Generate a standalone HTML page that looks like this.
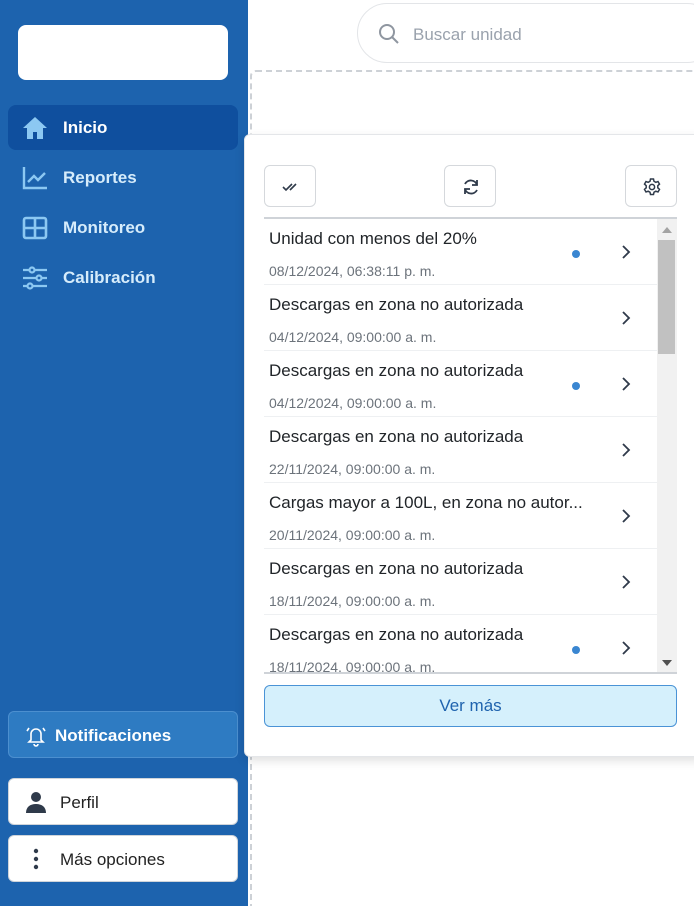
<!DOCTYPE html>
<html><head><meta charset="utf-8"><style>
*{box-sizing:border-box;margin:0;padding:0}
html,body{width:694px;height:906px;overflow:hidden}
body{background:#fff;font-family:"Liberation Sans",sans-serif;position:relative}
.side{position:absolute;left:0;top:0;width:248px;height:906px;background:#1d63ae}
.logo{position:absolute;left:18px;top:25px;width:210px;height:55px;background:#fff;border-radius:8px}
.nav{position:absolute;left:8px;width:230px;height:45px;border-radius:8px;display:flex;align-items:center;color:#fff;font-size:17px;font-weight:bold}
.nav svg{position:absolute;left:14px}
.nav span{position:absolute;left:55px}
.nav.act{background:#0f4f9e}
.nav .lbl{color:#d6ecfb}
.notif{position:absolute;left:8px;top:711px;width:230px;height:47px;background:#2e7bc2;border:1px solid #4c8fcf;border-radius:6px;color:#fff;font-weight:bold;font-size:17px}
.notif svg{position:absolute;left:16px;top:13px}
.notif span{position:absolute;left:46px;top:14px}
.wb{position:absolute;left:8px;width:230px;height:47px;background:#fff;border:1px solid #cfd4da;border-radius:6px;font-size:17px;color:#222}
.wb span{position:absolute;left:51px;top:14px}
.wb svg{position:absolute;left:16px;top:12px}
.search{position:absolute;left:357px;top:3px;width:360px;height:60px;border:1px solid #e3e5e8;border-radius:30px}
.search span{position:absolute;left:55px;top:21px;font-size:17px;color:#9aa2ad}
.search svg{position:absolute;left:20px;top:19px}
.dash{position:absolute;left:250px;top:70px;width:460px;height:860px;border:2px dashed #cdd1d6;border-radius:6px}
.pop{position:absolute;left:244px;top:134px;width:460px;height:623px;background:#fff;border:1px solid #e4e6e9;border-radius:6px;box-shadow:0 4px 10px rgba(0,0,0,.12)}
.btn{position:absolute;top:165px;width:52px;height:42px;border:1px solid #d5d8dc;border-radius:6px;background:#fff}
.btn svg{position:absolute;left:16px;top:11px}
.list{position:absolute;left:264px;top:217px;width:413px;height:457px;border-top:2px solid #cfd3d8;border-bottom:2px solid #cfd3d8;overflow:hidden}
.row{position:absolute;left:0;width:393px;height:66px;border-bottom:1px solid #eef0f2}
.t{position:absolute;left:5px;top:10px;font-size:17px;color:#212529;white-space:nowrap}
.d{position:absolute;left:5px;top:44px;font-size:14px;color:#6c737b}
.dot{position:absolute;left:308px;top:31px;width:8px;height:8px;border-radius:50%;background:#3a86d1}
.chev{position:absolute;left:357px;top:26px}
.sb{position:absolute;left:393px;top:0;width:20px;height:457px;background:#f1f1f1}
.thumb{position:absolute;left:1px;top:21px;width:17px;height:114px;background:#c1c1c1}
.ver{position:absolute;left:264px;top:685px;width:413px;height:42px;background:#d5f0fc;border:1px solid #4a93d6;border-radius:6px;color:#1f63ae;font-size:17px;text-align:center;line-height:40px}
</style></head><body>
<div class="side">
<div class="logo"></div>
<div class="nav act" style="top:105px"><svg width="26" height="24" viewBox="0 0 26 24"><path d="M13 1L1 12h4v11h6v-7h4v7h6V12h4z" fill="#8cc8f2"/></svg><span>Inicio</span></div>
<div class="nav" style="top:155px"><svg width="26" height="24" viewBox="0 0 26 24" fill="none" stroke="#8cc8f2" stroke-width="2.4"><path d="M2 1v21h23"/><path d="M6 16l6-6 4 4 7-7"/></svg><span class="lbl">Reportes</span></div>
<div class="nav" style="top:205px"><svg width="26" height="24" viewBox="0 0 26 24" fill="none" stroke="#8cc8f2" stroke-width="2.6"><rect x="2" y="2" width="22" height="20" rx="2"/><path d="M13 2v20M2 12h22"/></svg><span class="lbl">Monitoreo</span></div>
<div class="nav" style="top:255px"><svg width="26" height="24" viewBox="0 0 26 24" fill="none" stroke="#8cc8f2" stroke-width="2.2"><path d="M1 4h24M1 12h24M1 20h24"/><circle cx="10" cy="4" r="2.5" fill="#1d63ae"/><circle cx="17" cy="12" r="2.5" fill="#1d63ae"/><circle cx="8" cy="20" r="2.5" fill="#1d63ae"/></svg><span class="lbl">Calibración</span></div>
<div class="notif"><svg width="22" height="22" viewBox="0 0 22 22" fill="none" stroke="#fff" stroke-width="1.6"><path d="M6 15V9a5 5 0 0110 0v6l2 2H4z"/><path d="M9 19a2 2 0 004 0"/><path d="M2 6l2-3M20 6l-2-3"/></svg><span>Notificaciones</span></div>
<div class="wb" style="top:778px"><svg width="22" height="22" viewBox="0 0 22 22" fill="#2f3a4a"><circle cx="11" cy="6" r="5"/><path d="M1 22c0-6 4-9 10-9s10 3 10 9z"/></svg><span>Perfil</span></div>
<div class="wb" style="top:835px"><svg width="22" height="22" viewBox="0 0 22 22" fill="#2f3a4a"><circle cx="11" cy="3" r="2.2"/><circle cx="11" cy="11" r="2.2"/><circle cx="11" cy="19" r="2.2"/></svg><span>Más opciones</span></div>
</div>
<div class="search"><svg width="22" height="22" viewBox="0 0 22 22" fill="none" stroke="#8f96a0" stroke-width="2"><circle cx="9" cy="9" r="7"/><path d="M14 14l6 6"/></svg><span>Buscar unidad</span></div>
<div class="dash"></div>
<div class="pop"></div>
<div class="btn" style="left:264px"><svg width="20" height="20" viewBox="0 0 20 20" fill="none" stroke="#2f3a4a" stroke-width="1.6"><path d="M2 10l3 3 6-6M9 13l6-6"/></svg></div>
<div class="btn" style="left:444px"><svg width="20" height="20" viewBox="0 0 20 20" fill="none" stroke="#2f3a4a" stroke-width="1.8"><path d="M16 8a6.5 6.5 0 00-12-1M4 12a6.5 6.5 0 0012 1"/><path d="M16 3v5h-5M4 17v-5h5"/></svg></div>
<div class="btn" style="left:625px"><svg width="20" height="20" viewBox="0 0 20 20" fill="none" stroke="#2f3a4a" stroke-width="1.5"><path d="M8.5 2h3l.5 2.3 1.8 1 2.2-.8 1.5 2.6-1.7 1.6v2.1l1.7 1.6-1.5 2.6-2.2-.8-1.8 1-.5 2.3h-3l-.5-2.3-1.8-1-2.2.8-1.5-2.6 1.7-1.6V8.7L2.5 7.1 4 4.5l2.2.8 1.8-1z"/><circle cx="10" cy="10" r="2.6"/></svg></div>
<div class="list">
<div class="row" style="top:0"><div class="t">Unidad con menos del 20%</div><div class="d">08/12/2024, 06:38:11 p. m.</div><div class="dot"></div><svg class="chev" width="10" height="14" viewBox="0 0 10 14" fill="none" stroke="#2f3a4a" stroke-width="1.8"><path d="M2 1l6 6-6 6"/></svg></div>
<div class="row" style="top:66px"><div class="t">Descargas en zona no autorizada</div><div class="d">04/12/2024, 09:00:00 a. m.</div><svg class="chev" width="10" height="14" viewBox="0 0 10 14" fill="none" stroke="#2f3a4a" stroke-width="1.8"><path d="M2 1l6 6-6 6"/></svg></div>
<div class="row" style="top:132px"><div class="t">Descargas en zona no autorizada</div><div class="d">04/12/2024, 09:00:00 a. m.</div><div class="dot"></div><svg class="chev" width="10" height="14" viewBox="0 0 10 14" fill="none" stroke="#2f3a4a" stroke-width="1.8"><path d="M2 1l6 6-6 6"/></svg></div>
<div class="row" style="top:198px"><div class="t">Descargas en zona no autorizada</div><div class="d">22/11/2024, 09:00:00 a. m.</div><svg class="chev" width="10" height="14" viewBox="0 0 10 14" fill="none" stroke="#2f3a4a" stroke-width="1.8"><path d="M2 1l6 6-6 6"/></svg></div>
<div class="row" style="top:264px"><div class="t">Cargas mayor a 100L, en zona no autor...</div><div class="d">20/11/2024, 09:00:00 a. m.</div><svg class="chev" width="10" height="14" viewBox="0 0 10 14" fill="none" stroke="#2f3a4a" stroke-width="1.8"><path d="M2 1l6 6-6 6"/></svg></div>
<div class="row" style="top:330px"><div class="t">Descargas en zona no autorizada</div><div class="d">18/11/2024, 09:00:00 a. m.</div><svg class="chev" width="10" height="14" viewBox="0 0 10 14" fill="none" stroke="#2f3a4a" stroke-width="1.8"><path d="M2 1l6 6-6 6"/></svg></div>
<div class="row" style="top:396px"><div class="t">Descargas en zona no autorizada</div><div class="d">18/11/2024, 09:00:00 a. m.</div><div class="dot"></div><svg class="chev" width="10" height="14" viewBox="0 0 10 14" fill="none" stroke="#2f3a4a" stroke-width="1.8"><path d="M2 1l6 6-6 6"/></svg></div>
<div class="sb"><div class="thumb"></div>
<svg style="position:absolute;left:5px;top:8px" width="10" height="6"><path d="M0 6L5 0 10 6z" fill="#a3a3a3"/></svg>
<svg style="position:absolute;left:5px;top:441px" width="10" height="6"><path d="M0 0L5 6 10 0z" fill="#505050"/></svg></div>
</div>
<div class="ver">Ver más</div>
</body></html>
